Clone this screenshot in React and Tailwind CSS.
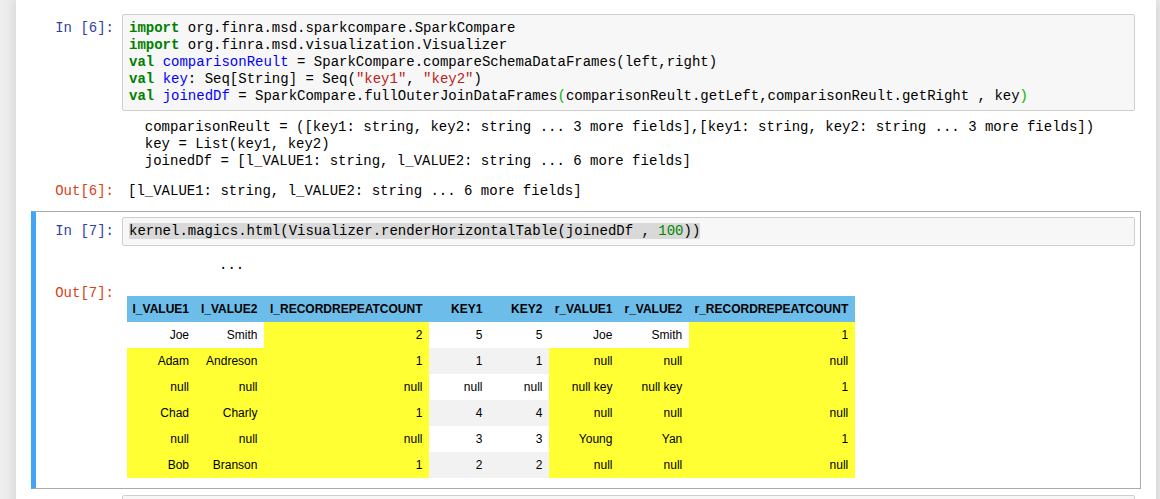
import React from "react"

const mono = "font-['Liberation_Mono',monospace] text-[14px] leading-[17px]"

const K = ({ children }) => <span className="font-bold text-[#008000]">{children}</span>
const D = ({ children }) => <span className="text-[#0000ff]">{children}</span>
const S = ({ children }) => <span className="text-[#ba2121]">{children}</span>
const N = ({ children }) => <span className="text-[#008800]">{children}</span>
const B = ({ children }) => <span className="text-[#00bb00]">{children}</span>

const headers = ["l_VALUE1", "l_VALUE2", "l_RECORDREPEATCOUNT", "KEY1", "KEY2", "r_VALUE1", "r_VALUE2", "r_RECORDREPEATCOUNT"]
const widths = ["w-[69px]", "w-[68px]", "w-[165px]", "w-[60px]", "w-[60px]", "w-[70px]", "w-[69px]", "w-[166px]"]

// y = celda resaltada (diferencia)
const rows = [
  { v: ["Joe", "Smith", "2", "5", "5", "Joe", "Smith", "1"], y: [2, 7] },
  { v: ["Adam", "Andreson", "1", "1", "1", "null", "null", "null"], y: [0, 1, 2, 5, 6, 7] },
  { v: ["null", "null", "null", "null", "null", "null key", "null key", "1"], y: [0, 1, 2, 5, 6, 7] },
  { v: ["Chad", "Charly", "1", "4", "4", "null", "null", "null"], y: [0, 1, 2, 5, 6, 7] },
  { v: ["null", "null", "null", "3", "3", "Young", "Yan", "1"], y: [0, 1, 2, 5, 6, 7] },
  { v: ["Bob", "Branson", "1", "2", "2", "null", "null", "null"], y: [0, 1, 2, 5, 6, 7] },
]

function Prompt({ out, n, className = "" }) {
  return (
    <div className={`w-[85px] shrink-0 text-right pr-[8px] ${mono} ${out ? "text-[#d84315]" : "text-[#303f9f]"} ${className}`}>
      {out ? `Out[${n}]:` : `In [${n}]:`}
    </div>
  )
}

function CodeBox({ children }) {
  return (
    <div className={`flex-1 border border-[#cfcfcf] rounded-[2px] bg-[#f7f7f7] pl-[6px] py-[5px] text-black whitespace-pre ${mono}`}>
      {children}
    </div>
  )
}

export default function App() {
  return (
    <div className="min-h-screen bg-[#eeeeee] overflow-hidden">
      <div className="ml-[16px] w-[1140px] bg-white pt-[8px] min-h-[560px] shadow-[0_0_12px_1px_rgba(87,87,87,0.2)]">

        {/* celda 6 */}
        <div className="mx-[15px] border border-transparent p-[5px]">
          <div className="flex">
            <Prompt n={6} className="pt-[6px]" />
            <CodeBox>
              <div><K>import</K> org.finra.msd.sparkcompare.SparkCompare</div>
              <div><K>import</K> org.finra.msd.visualization.Visualizer</div>
              <div><K>val</K> <D>comparisonReult</D> = SparkCompare.compareSchemaDataFrames(left,right)</div>
              <div><K>val</K> <D>key</D>: Seq[String] = Seq(<S>"key1"</S>, <S>"key2"</S>)</div>
              <div><K>val</K> <D>joinedDf</D> = SparkCompare.fullOuterJoinDataFrames<B>(</B>comparisonReult.getLeft,comparisonReult.getRight , key<B>)</B></div>
            </CodeBox>
          </div>
          <div className="flex mt-[8px]">
            <div className="w-[85px] shrink-0" />
            <div className={`pl-[6px] text-black whitespace-pre ${mono}`}>
              <div>{"  comparisonReult = ([key1: string, key2: string ... 3 more fields],[key1: string, key2: string ... 3 more fields])"}</div>
              <div>{"  key = List(key1, key2)"}</div>
              <div>{"  joinedDf = [l_VALUE1: string, l_VALUE2: string ... 6 more fields]"}</div>
            </div>
          </div>
          <div className="flex mt-[13px] pb-[5px]">
            <Prompt out n={6} />
            <div className={`pl-[6px] text-black whitespace-pre ${mono}`}>[l_VALUE1: string, l_VALUE2: string ... 6 more fields]</div>
          </div>
        </div>

        {/* celda 7 (seleccionada) */}
        <div className="mx-[15px] border border-[#ababab] border-l-[5px] border-l-[#42a5f5] p-[5px] pl-[1px]">
          <div className="flex">
            <Prompt n={7} className="pt-[6px]" />
            <CodeBox>
              <span className="bg-[#d9d9d9]">kernel.magics.html(Visualizer.renderHorizontalTable(joinedDf , <N>100</N>))</span>
            </CodeBox>
          </div>
          <div className="flex mt-[11px]">
            <div className="w-[85px] shrink-0" />
            <div className={`pl-[97px] text-black ${mono}`}>...</div>
          </div>
          <div className="flex mt-[11px] pb-[5px]">
            <Prompt out n={7} />
            <div className="pl-[5px] pt-[11px]">
              <table className="border-collapse table-fixed font-['Liberation_Sans',Arial,sans-serif] text-[12px] text-black">
                <thead>
                  <tr className="bg-[#6cbdea]">
                    {headers.map((h, i) => (
                      <th key={h} className={`${widths[i]} h-[26px] pr-[7px] pl-[5px] text-right font-bold whitespace-nowrap`}>{h}</th>
                    ))}
                  </tr>
                </thead>
                <tbody>
                  {rows.map((r, ri) => (
                    <tr key={ri} className={ri % 2 === 1 ? "bg-[#f2f2f2]" : "bg-white"}>
                      {r.v.map((c, ci) => (
                        <td key={ci} className={`h-[26px] pr-[7px] pl-[5px] text-right whitespace-nowrap ${r.y.includes(ci) ? "bg-[#ffff33]" : ""}`}>{c}</td>
                      ))}
                    </tr>
                  ))}
                </tbody>
              </table>
            </div>
          </div>
        </div>

        {/* celda siguiente (cortada) */}
        <div className="mx-[15px] border border-transparent p-[5px]">
          <div className="flex">
            <div className="w-[85px] shrink-0" />
            <div className="flex-1 h-[40px] border border-[#cfcfcf] rounded-[2px] bg-[#f7f7f7]" />
          </div>
        </div>
      </div>
    </div>
  )
}
